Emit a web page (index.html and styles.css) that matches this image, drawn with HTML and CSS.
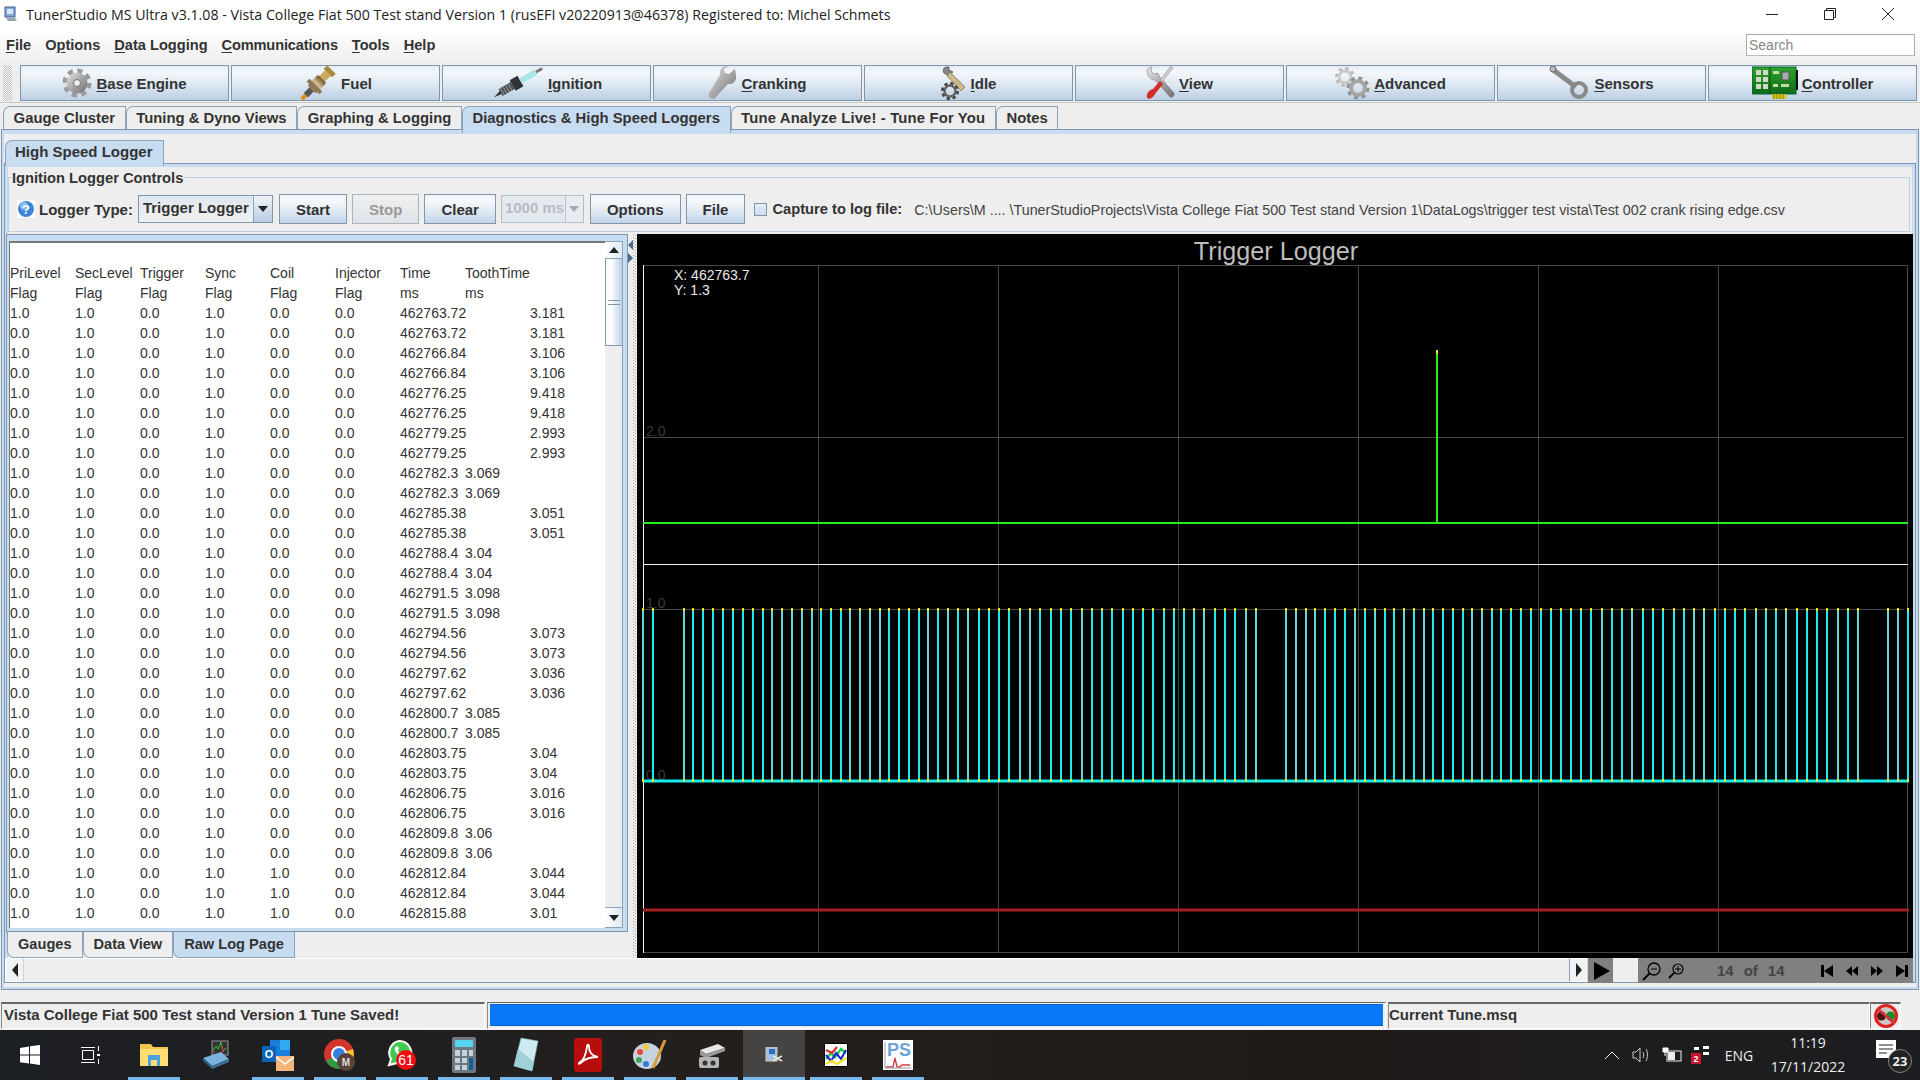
FILE: index.html
```html
<!DOCTYPE html>
<html lang="en">
<head>
<meta charset="utf-8">
<title>TunerStudio MS Ultra</title>
<link rel="stylesheet" href="styles.css">
</head>
<body>
<svg class="defs" width="0" height="0" aria-hidden="true">
  <defs>
    <linearGradient id="steel" x1="0" y1="0" x2="1" y2="1"><stop offset="0" stop-color="#e8e8e8"/><stop offset=".5" stop-color="#a8a8a8"/><stop offset="1" stop-color="#6f6f6f"/></linearGradient>
    <linearGradient id="brass" x1="0" y1="0" x2="1" y2="0"><stop offset="0" stop-color="#8a6a3a"/><stop offset=".5" stop-color="#d8c090"/><stop offset="1" stop-color="#6a5230"/></linearGradient>
    <linearGradient id="board" x1="0" y1="0" x2="0" y2="1"><stop offset="0" stop-color="#2ea52e"/><stop offset="1" stop-color="#0c6a16"/></linearGradient>
  </defs>
</svg>
<div class="window">
  <div class="chrome">
    <header class="titlebar">
      <svg class="appicon" width="16" height="16" viewBox="0 0 16 16"><rect x="2" y="1" width="10" height="10" fill="#7ea6d6" stroke="#41608a"/><rect x="4" y="3" width="6" height="5" fill="#d7e6f6"/><path d="M3 12l9 0 2 3H5z" fill="#9aa4ae"/></svg>
      <span class="title">TunerStudio MS Ultra v3.1.08 - Vista College Fiat 500 Test stand Version 1 (rusEFI v20220913@46378) Registered to: Michel Schmets</span>
      <div class="winctl">
        <svg width="14" height="14" viewBox="0 0 14 14"><path d="M1 7.500h12" stroke="#222" fill="none"/></svg>
        <svg width="14" height="14" viewBox="0 0 14 14"><path d="M1.500 3.500h9v9h-9zM3.500 3.500v-2h9v9h-2" stroke="#222" fill="none"/></svg>
        <svg width="14" height="14" viewBox="0 0 14 14"><path d="M1 1l12 12M13 1L1 13" stroke="#222" fill="none"/></svg>
      </div>
    </header>
    <nav class="menubar">
      <span class="menu"><u>F</u>ile</span>
      <span class="menu">O<u>p</u>tions</span>
      <span class="menu"><u>D</u>ata Logging</span>
      <span class="menu menu-tight"><u>C</u>ommunications</span>
      <span class="menu"><u>T</u>ools</span>
      <span class="menu"><u>H</u>elp</span>
      <div class="search">Search</div>
    </nav>
  </div>

  <div class="toolbar">
    <div class="grip"></div>
    <button class="tool">
      <svg width="30" height="34" viewBox="0 0 30 34"><circle cx="15" cy="17" r="12" fill="none" stroke="#9a9a9a" stroke-width="5" stroke-dasharray="5 4.420"/><circle cx="15" cy="17" r="10.500" fill="url(#steel)"/><circle cx="15" cy="17" r="3.500" fill="#eee" stroke="#777"/></svg>
      <span><u>B</u>ase Engine</span>
    </button>
    <button class="tool">
      <svg width="38" height="34" viewBox="0 0 38 34"><g transform="rotate(-45 19 17)"><rect x="-4" y="15" width="6" height="4" fill="#e08a1a"/><rect x="2" y="14" width="8" height="6" fill="#555"/><rect x="10" y="11" width="15" height="12" rx="2" fill="url(#brass)"/><rect x="12" y="8" width="4" height="18" fill="#8a7a5a"/><rect x="25" y="13" width="8" height="8" fill="#c9a860"/><rect x="33" y="11" width="5" height="12" fill="#a88a3c"/></g></svg>
      <span>Fuel</span>
    </button>
    <button class="tool">
      <svg width="53" height="34" viewBox="0 0 53 34"><g transform="rotate(-30 26 17)"><path d="M-1 18l9-3 0 4z" fill="#333"/><rect x="7" y="13" width="14" height="8" fill="#4a4f55"/><path d="M9 13v8M12 13v8M15 13v8M18 13v8" stroke="#999"/><rect x="21" y="11" width="9" height="12" fill="#30343a"/><rect x="30" y="14" width="18" height="6" fill="#a7e6e2"/><rect x="48" y="15.500" width="7" height="3" fill="#777"/></g></svg>
      <span><u>I</u>gnition</span>
    </button>
    <button class="tool">
      <svg width="29" height="34" viewBox="0 0 29 34"><path d="M27 3l-6 5-4-1-1-4 5-3c-6-1-10 3-9 9L1 27c-2 3 3 8 6 5l13-14c5 1 9-3 8-9z" fill="url(#steel)"/></svg>
      <span><u>C</u>ranking</span>
    </button>
    <button class="tool">
      <svg width="26" height="34" viewBox="0 0 26 34"><path d="M6 1c-3 0-5 3-3 6l3 2 3-1 3-2-2-1-2-1V1z" fill="#888" stroke="#333" stroke-width=".6"/><path d="M9 6l15 15-4 4L6 10z" fill="#cdb888" stroke="#665c44" stroke-width=".6"/><circle cx="9" cy="25" r="7" fill="none" stroke="#444" stroke-width="4" stroke-dasharray="3 2.500"/><circle cx="9" cy="25" r="5.500" fill="none" stroke="#666" stroke-width="2.500"/></svg>
      <span><u>I</u>dle</span>
    </button>
    <button class="tool">
      <svg width="29" height="34" viewBox="0 0 29 34"><path d="M1 6c0-3 2-5 5-5L5 5l3 3 3-1c2 0 2 3 2 3l15 17c1 3-2 5-4 4L9 14C5 14 1 10 1 6z" fill="url(#steel)" stroke="#777" stroke-width=".5"/><path d="M27 2l-11 14-2-2L25 0z" fill="#ccc" stroke="#888" stroke-width=".5"/><path d="M14 15l3 3-8 10c-2 5-8 6-8 3-1-3 2-7 6-8z" fill="#d32a2a"/></svg>
      <span><u>V</u>iew</span>
    </button>
    <button class="tool">
      <svg width="35" height="34" viewBox="0 0 35 34"><circle cx="10" cy="11" r="7.500" fill="none" stroke="#bbb" stroke-width="5" stroke-dasharray="3 2.890"/><circle cx="10" cy="11" r="6" fill="none" stroke="#c9c9c9" stroke-width="3"/><circle cx="23" cy="22" r="9" fill="none" stroke="#909090" stroke-width="5" stroke-dasharray="3.500 3.570"/><circle cx="23" cy="22" r="7" fill="none" stroke="#a5a5a5" stroke-width="4"/></svg>
      <span><u>A</u>dvanced</span>
    </button>
    <button class="tool">
      <svg width="41" height="34" viewBox="0 0 41 34"><path d="M3 3l24 18" stroke="#8a8a8a" stroke-width="5" fill="none"/><circle cx="4" cy="3" r="3" fill="#bbb" stroke="#666"/><circle cx="30" cy="24" r="7" fill="none" stroke="#888" stroke-width="4"/></svg>
      <span><u>S</u>ensors</span>
    </button>
    <button class="tool">
      <svg width="46" height="34" viewBox="0 0 46 34"><rect x="0" y="1" width="44" height="27" fill="url(#board)" stroke="#063"/><path d="M4 4h5v5H4zM11 4h5v5h-5zM4 11h5v5H4zM11 11h5v5h-5zM4 18h5v5H4zM11 18h5v5h-5z" fill="#d5d5c8"/><path d="M18 1v27" stroke="#0a4a12"/><rect x="30" y="6" width="7" height="8" fill="#aaa" stroke="#555"/><path d="M21 5h6v3h-6zM21 18h5v3h-5zM29 18h8v3h-8z" fill="#c8d8a8"/><rect x="20" y="28" width="14" height="5" fill="#d8c81a"/><path d="M22 28v5M25 28v5M28 28v5M31 28v5" stroke="#8a7a10"/><rect x="44" y="4" width="2" height="20" fill="#111"/></svg>
      <span><u>C</u>ontroller</span>
    </button>
  </div>

  <div class="tabs">
    <span class="tab">Gauge Cluster</span>
    <span class="tab">Tuning &amp; Dyno Views</span>
    <span class="tab">Graphing &amp; Logging</span>
    <span class="tab tab-on">Diagnostics &amp; High Speed Loggers</span>
    <span class="tab tab-wide">Tune Analyze Live! - Tune For You</span>
    <span class="tab">Notes</span>
  </div>

  <main class="outer">
    <div class="subtabs"><span class="tab tab-on sub">High Speed Logger</span></div>
    <section class="inner">
      <div class="group">
        <div class="grouptitle">Ignition Logger Controls</div>
        <div class="controls">
          <svg class="help" width="18" height="18" viewBox="0 0 18 18"><rect width="18" height="18" fill="#fff"/><circle cx="9" cy="9" r="8" fill="#3b84d8"/><circle cx="7" cy="6" r="4" fill="#8dbdf0"/><text x="9" y="13.500" class="helpq">?</text></svg>
          <span class="lbl">Logger Type:</span>
          <div class="combo"><span class="combotext">Trigger Logger</span><span class="comboarrow"><i class="tri"></i></span></div>
          <button class="btn">Start</button>
          <button class="btn off">Stop</button>
          <button class="btn">Clear</button>
          <div class="combo combo-off"><span class="combotext">1000 ms</span><span class="comboarrow"><i class="tri"></i></span></div>
          <button class="btn">Options</button>
          <button class="btn">File</button>
          <span class="check"></span>
          <span class="lbl lbl-cap">Capture to log file:</span>
          <span class="path">C:\Users\M .... \TunerStudioProjects\Vista College Fiat 500 Test stand Version 1\DataLogs\trigger test vista\Test 002 crank rising edge.csv</span>
        </div>
      </div>

      <div class="split">
        <div class="leftcol">
          <div class="logframe">
            <pre class="log">

PriLevel&#9;SecLevel&#9;Trigger&#9;Sync&#9;Coil&#9;Injector&#9;Time&#9;ToothTime
Flag&#9;Flag&#9;Flag&#9;Flag&#9;Flag&#9;Flag&#9;ms&#9;ms
1.0&#9;1.0&#9;0.0&#9;1.0&#9;0.0&#9;0.0&#9;462763.72&#9;3.181
0.0&#9;1.0&#9;0.0&#9;1.0&#9;0.0&#9;0.0&#9;462763.72&#9;3.181
1.0&#9;1.0&#9;0.0&#9;1.0&#9;0.0&#9;0.0&#9;462766.84&#9;3.106
0.0&#9;1.0&#9;0.0&#9;1.0&#9;0.0&#9;0.0&#9;462766.84&#9;3.106
1.0&#9;1.0&#9;0.0&#9;1.0&#9;0.0&#9;0.0&#9;462776.25&#9;9.418
0.0&#9;1.0&#9;0.0&#9;1.0&#9;0.0&#9;0.0&#9;462776.25&#9;9.418
1.0&#9;1.0&#9;0.0&#9;1.0&#9;0.0&#9;0.0&#9;462779.25&#9;2.993
0.0&#9;1.0&#9;0.0&#9;1.0&#9;0.0&#9;0.0&#9;462779.25&#9;2.993
1.0&#9;1.0&#9;0.0&#9;1.0&#9;0.0&#9;0.0&#9;462782.3&#9;3.069
0.0&#9;1.0&#9;0.0&#9;1.0&#9;0.0&#9;0.0&#9;462782.3&#9;3.069
1.0&#9;1.0&#9;0.0&#9;1.0&#9;0.0&#9;0.0&#9;462785.38&#9;3.051
0.0&#9;1.0&#9;0.0&#9;1.0&#9;0.0&#9;0.0&#9;462785.38&#9;3.051
1.0&#9;1.0&#9;0.0&#9;1.0&#9;0.0&#9;0.0&#9;462788.4&#9;3.04
0.0&#9;1.0&#9;0.0&#9;1.0&#9;0.0&#9;0.0&#9;462788.4&#9;3.04
1.0&#9;1.0&#9;0.0&#9;1.0&#9;0.0&#9;0.0&#9;462791.5&#9;3.098
0.0&#9;1.0&#9;0.0&#9;1.0&#9;0.0&#9;0.0&#9;462791.5&#9;3.098
1.0&#9;1.0&#9;0.0&#9;1.0&#9;0.0&#9;0.0&#9;462794.56&#9;3.073
0.0&#9;1.0&#9;0.0&#9;1.0&#9;0.0&#9;0.0&#9;462794.56&#9;3.073
1.0&#9;1.0&#9;0.0&#9;1.0&#9;0.0&#9;0.0&#9;462797.62&#9;3.036
0.0&#9;1.0&#9;0.0&#9;1.0&#9;0.0&#9;0.0&#9;462797.62&#9;3.036
1.0&#9;1.0&#9;0.0&#9;1.0&#9;0.0&#9;0.0&#9;462800.7&#9;3.085
0.0&#9;1.0&#9;0.0&#9;1.0&#9;0.0&#9;0.0&#9;462800.7&#9;3.085
1.0&#9;1.0&#9;0.0&#9;1.0&#9;0.0&#9;0.0&#9;462803.75&#9;3.04
0.0&#9;1.0&#9;0.0&#9;1.0&#9;0.0&#9;0.0&#9;462803.75&#9;3.04
1.0&#9;1.0&#9;0.0&#9;1.0&#9;0.0&#9;0.0&#9;462806.75&#9;3.016
0.0&#9;1.0&#9;0.0&#9;1.0&#9;0.0&#9;0.0&#9;462806.75&#9;3.016
1.0&#9;1.0&#9;0.0&#9;1.0&#9;0.0&#9;0.0&#9;462809.8&#9;3.06
0.0&#9;1.0&#9;0.0&#9;1.0&#9;0.0&#9;0.0&#9;462809.8&#9;3.06
1.0&#9;1.0&#9;0.0&#9;1.0&#9;1.0&#9;0.0&#9;462812.84&#9;3.044
0.0&#9;1.0&#9;0.0&#9;1.0&#9;1.0&#9;0.0&#9;462812.84&#9;3.044
1.0&#9;1.0&#9;0.0&#9;1.0&#9;1.0&#9;0.0&#9;462815.88&#9;3.01
0.0&#9;1.0&#9;0.0&#9;1.0&#9;1.0&#9;0.0&#9;462815.88&#9;3.01</pre>
            <div class="vscroll">
              <span class="vbtn"><i class="tri tri-up"></i></span>
              <span class="vthumb"><i class="gripline"></i></span>
              <span class="vtrack"></span>
              <span class="vbtn vbtn-low"><i class="tri"></i></span>
            </div>
          </div>
          <div class="btabs">
            <span class="btab">Gauges</span>
            <span class="btab">Data View</span>
            <span class="btab btab-on">Raw Log Page</span>
          </div>
        </div>

        <div class="splitter"><i class="sp-l"></i><i class="sp-r"></i></div>

        <svg class="chart" width="1276" height="724" viewBox="637 234 1276 724">
          <defs>
            <path id="pulseA" d="M653 608V782M693 608V782M703 608V782M713 608V782M723 608V782M733 608V782M743 608V782M753 608V782M763 608V782M821 608V782M831 608V782M841 608V782M889 608V782M899 608V782M909 608V782M919 608V782M938 608V782M958 608V782M979 608V782M989 608V782M999 608V782M1009 608V782M1040 608V782M1051 608V782M1061 608V782M1071 608V782M1092 608V782M1102 608V782M1112 608V782M1123 608V782M1133 608V782M1143 608V782M1153 608V782M1164 608V782M1174 608V782M1184 608V782M1194 608V782M1215 608V782M1225 608V782M1235 608V782M1325 608V782M1335 608V782M1345 608V782M1365 608V782M1385 608V782M1394 608V782M1414 608V782M1433 608V782M1443 608V782M1453 608V782M1463 608V782M1492 608V782M1501 608V782M1511 608V782M1521 608V782M1531 608V782M1541 608V782M1551 608V782M1561 608V782M1571 608V782M1581 608V782M1591 608V782M1612 608V782M1622 608V782M1643 608V782M1653 608V782M1663 608V782M1674 608V782M1684 608V782M1715 608V782M1725 608V782M1735 608V782M1745 608V782M1766 608V782M1776 608V782M1797 608V782M1807 608V782M1817 608V782M1827 608V782M1848 608V782M1908 608V782"/>
            <path id="pulseB" d="M643 608V782M684 608V782M772 608V782M782 608V782M792 608V782M802 608V782M812 608V782M850 608V782M860 608V782M870 608V782M880 608V782M928 608V782M948 608V782M968 608V782M1020 608V782M1030 608V782M1082 608V782M1204 608V782M1246 608V782M1256 608V782M1286 608V782M1296 608V782M1306 608V782M1315 608V782M1355 608V782M1375 608V782M1404 608V782M1424 608V782M1472 608V782M1482 608V782M1602 608V782M1632 608V782M1694 608V782M1704 608V782M1756 608V782M1786 608V782M1838 608V782M1858 608V782M1888 608V782M1898 608V782"/>
          </defs>
          <rect x="637" y="234" width="1276" height="724" class="c-bg"/>
          <text x="1276" y="260" class="c-title">Trigger Logger</text>
          <path class="c-grid" d="M643.500 265.500H1907.500V952.500H643.500M818.500 265V952M998.500 265V952M1178.500 265V952M1358.500 265V952M1538.500 265V952M1718.500 265V952M643 437.500H1904M643 609.500H1904"/>
          <path class="c-axis" d="M643.500 265V953"/>
          <text x="646" y="436" class="c-tick">2.0</text>
          <text x="646" y="608" class="c-tick">1.0</text>
          <text x="646" y="780" class="c-tick">0.0</text>
          <text x="674" y="280" class="c-read">X: 462763.7</text>
          <text x="674" y="295" class="c-read">Y: 1.3</text>
          <path class="c-green" d="M643 523H1908M1437 352V523"/>
          <path class="c-tip" d="M1437 350V354"/>
          <path class="c-white" d="M643 564.500H1908"/>
          <use href="#pulseA" class="c-cyan"/>
          <use href="#pulseB" class="c-cyan2"/>
          <path class="c-base" d="M643 781H1909"/>
          <use href="#pulseA" class="c-yellow"/>
          <use href="#pulseB" class="c-yellow"/>
          <path class="c-red" d="M643 910H1909"/>
        </svg>
      </div>

      <div class="hbar">
        <span class="hbtn"><i class="tri tri-left"></i></span>
        <span class="htrack"></span>
        <span class="hbtn hbtn-r"><i class="tri tri-right"></i></span>
        <span class="play"><i class="playtri"></i></span>
        <span class="hgap"></span>
        <div class="nav">
          <svg width="20" height="20" viewBox="0 0 20 20"><circle cx="12" cy="8" r="6" fill="none" stroke="#000" stroke-width="1.300"/><path d="M8 12l-7 7" stroke="#000" stroke-width="2"/><path d="M9 8h6" stroke="#000"/></svg>
          <svg class="zoomin" width="16" height="16" viewBox="0 0 16 16"><circle cx="10" cy="6" r="5" fill="none" stroke="#000" stroke-width="1.200"/><path d="M6 10l-5 5" stroke="#000" stroke-width="2"/><path d="M7 6h6M10 3v6" stroke="#000"/></svg>
          <span class="pages"><span>14</span><span>of</span><span>14</span></span>
          <svg width="14" height="14" viewBox="0 0 14 14"><path d="M1 1h3v12H1zM13 1v12L4 7z"/></svg>
          <svg width="14" height="14" viewBox="0 0 14 14"><path d="M7 2v10L1 7zM13 2v10L7 7z"/></svg>
          <svg width="14" height="14" viewBox="0 0 14 14"><path d="M1 2v10l6-5zM7 2v10l6-5z"/></svg>
          <svg width="14" height="14" viewBox="0 0 14 14"><path d="M1 1v12l9-6zM10 1h3v12h-3z"/></svg>
        </div>
      </div>
    </section>
  </main>

  <footer class="status">
    <div class="cell cell-msg">Vista College Fiat 500 Test stand Version 1 Tune Saved!</div>
    <div class="cell cell-bar"><div class="bar"></div></div>
    <div class="cell cell-tune">Current Tune.msq</div>
    <div class="cell cell-icon">
      <svg width="26" height="26" viewBox="0 0 26 26"><circle cx="13" cy="13" r="10.500" fill="#c9c9c9" stroke="#e32020" stroke-width="3"/><circle cx="8.500" cy="13" r="4.500" fill="#4a1212"/><circle cx="17.500" cy="13" r="4.500" fill="#1f8a2c"/><path d="M5 6l16 14" stroke="#e0303a" stroke-width="2.500"/></svg>
    </div>
  </footer>
</div>

<div class="taskbar">
  <span class="slot slot-n">
    <svg width="20" height="20" viewBox="0 0 20 20"><path d="M0 3l9-1.500V9.500H0zM10 1.300L20 0v9.500H10zM0 10.500h9V18.500l-9-1.300zM10 10.500h10V20l-10-1.400z" fill="#fff"/></svg>
  </span>
  <span class="slot slot-n">
    <svg width="20" height="20" viewBox="0 0 20 20" fill="none" stroke="#fff"><path d="M2.500 5.500h11v9h-11zM1 2.500h14M1 17.500h14M18.500 1v5M18.500 14v5"/><path d="M17 9h3v2h-3z" fill="#fff" stroke="none"/></svg>
  </span>
  <span class="slot run">
    <svg width="28" height="24" viewBox="0 0 28 24"><path d="M0 1h11l2 3h15v19H0z" fill="#f4c64e"/><path d="M0 6h28v17H0z" fill="#ffdd72"/><path d="M8 12h12v11h-3v-6h-6v6H8z" fill="#4aa3dc"/></svg>
  </span>
  <span class="slot slot-n">
    <svg width="28" height="30" viewBox="0 0 28 30"><rect x="10" y="1" width="16" height="14" fill="#333" stroke="#999"/><path d="M11 10l3-4 2 3 3-7 2 9 3-3" fill="none" stroke="#37c837"/><path d="M11 11l2 2M20 6l1 7" stroke="#d33"/><path d="M1 18l18-6 8 7-17 7z" fill="#7ab3dd"/><path d="M1 18l9 8v3l-9-8z" fill="#2c5f8a"/><path d="M10 26l17-7v3L10 29z" fill="#44708f"/></svg>
  </span>
  <span class="slot run">
    <svg width="32" height="32" viewBox="0 0 32 32"><rect x="8" y="1" width="20" height="20" fill="#1a7fdc"/><rect x="18" y="1" width="10" height="10" fill="#31a9ee"/><rect x="0" y="7" width="14" height="16" fill="#0b63b8"/><text x="7" y="19" class="tb-o">O</text><rect x="14" y="17" width="18" height="15" fill="#f3b57b"/><path d="M14 18l9 7 9-7" fill="none" stroke="#fff" stroke-width="1.500"/></svg>
  </span>
  <span class="slot run">
    <svg width="32" height="32" viewBox="0 0 32 32"><circle cx="15" cy="15" r="15" fill="#d5342c"/><path d="M15 15L2 22A15 15 0 0 0 22 28z" fill="#2c9a46"/><path d="M15 15l7 13A15 15 0 0 0 29 10z" fill="#f7c62d"/><circle cx="15" cy="15" r="7" fill="#3a7fe0" stroke="#fff" stroke-width="2"/><circle cx="22" cy="23" r="9" fill="#5a4236"/><text x="22" y="27" class="tb-m">M</text></svg>
  </span>
  <span class="slot run">
    <svg width="32" height="32" viewBox="0 0 32 32"><path d="M13 2a12 12 0 0 1 10 19L3 26l2-6A12 12 0 0 1 13 2z" fill="#3ecb4e" stroke="#fff" stroke-width="2"/><path d="M9 8c-2 4 5 12 9 10l1-3-3-1-1 1c-2-1-3-3-3-4l1-1-1-3z" fill="#fff"/><circle cx="20" cy="21" r="10" fill="#f20c14"/><text x="20" y="26" class="tb-b">61</text></svg>
  </span>
  <span class="slot run">
    <svg width="24" height="36" viewBox="0 0 24 36"><rect width="24" height="36" rx="2" fill="#6d7880"/><rect x="3" y="3" width="18" height="7" fill="#5bd4f0"/><path d="M3 13h5v6H3zM10 13h5v6h-5zM17 13h4v6h-4zM3 21h5v5H3zM10 21h5v5h-5zM3 28h5v5H3zM10 28h5v5h-5z" fill="#c7d3db"/><rect x="17" y="21" width="4" height="12" fill="#10609c"/></svg>
  </span>
  <span class="slot run">
    <svg width="26" height="36" viewBox="0 0 26 36"><path d="M8 1l17 3-6 30-18-5z" fill="#cdeaf0" stroke="#7bb" stroke-width=".6"/><path d="M5 12l-4 17 18 5 2-9z" fill="#9fd0d8"/></svg>
  </span>
  <span class="slot run">
    <svg width="28" height="34" viewBox="0 0 28 34"><rect width="28" height="34" rx="3" fill="#b60d0d"/><path d="M5 25c4-2 7-9 8-16 0-3 2-3 2 0 0 5 3 9 9 10-5 0-11 1-15 4-2 2-5 4-4 2z" fill="none" stroke="#fff" stroke-width="1.800"/></svg>
  </span>
  <span class="slot run">
    <svg width="34" height="34" viewBox="0 0 34 34"><ellipse cx="14" cy="18" rx="14" ry="13" fill="#c7d4e0"/><circle cx="7" cy="14" r="3" fill="#e84a3a"/><circle cx="13" cy="9" r="3" fill="#f5c93a"/><circle cx="6" cy="22" r="3" fill="#3ba35a"/><circle cx="13" cy="26" r="3" fill="#2c7fd5"/><path d="M32 2L20 30" stroke="#d89a3e" stroke-width="3"/></svg>
  </span>
  <span class="slot run">
    <svg width="28" height="30" viewBox="0 0 28 30"><path d="M2 10l18-6 7 4-19 6z" fill="#e8e8e8"/><path d="M2 10l6 4v4L2 15zM8 14l19-6v3L8 18z" fill="#9a9a9a"/><rect x="1" y="17" width="20" height="11" rx="2" fill="#b4b4b4"/><circle cx="7" cy="23" r="2.500" fill="#333"/><circle cx="15" cy="23" r="2.500" fill="#333"/></svg>
  </span>
  <span class="slot run slot-on">
    <svg width="18" height="16" viewBox="0 0 18 16"><rect x="1" y="0" width="11" height="14" fill="#9cc2e6" stroke="#d9c7a0"/><rect x="4" y="2" width="6" height="5" fill="#2f6fb8"/><path d="M8 9l9 5M8 14l9-5" stroke="#e6e6e6" stroke-width="1.500"/></svg>
  </span>
  <span class="slot run">
    <svg width="24" height="24" viewBox="0 0 24 24"><rect width="24" height="24" fill="#000"/><rect x="1" y="1" width="22" height="22" fill="#fff"/><path d="M2 16l5-6 4 4 6-8 5 4" fill="none" stroke="#1fd14a" stroke-width="2.500"/><path d="M2 12l5 6 5-8 5 6 5-9" fill="none" stroke="#2222d8" stroke-width="2"/><path d="M2 7l6 3 5-6" fill="none" stroke="#e0242a" stroke-width="2"/><path d="M2 21l6-3 5 3 9-6" fill="none" stroke="#f5e52a" stroke-width="2.500"/></svg>
  </span>
  <span class="slot run">
    <svg width="30" height="30" viewBox="0 0 30 30"><rect width="30" height="30" fill="#fff"/><text x="4" y="16" class="tb-ps">PS</text><path d="M3 27h7l2-9 2 9h3l2-2h8" fill="none" stroke="#d43d3d" stroke-width="1.300"/><path d="M2 2v26h26" fill="none" stroke="#99a"/></svg>
  </span>

  <div class="tray">
    <svg width="16" height="10" viewBox="0 0 16 10" fill="none" stroke="#eee"><path d="M1 9l7-7 7 7"/></svg>
    <svg class="spk" width="20" height="16" viewBox="0 0 20 16" fill="none" stroke="#ccc"><path d="M1 5h3l4-4v14l-4-4H1zM11 5c1 2 1 4 0 6M14 2c2 4 2 8 0 12"/></svg>
    <svg class="batt" width="20" height="16" viewBox="0 0 20 16"><rect x="5" y="4" width="14" height="10" fill="none" stroke="#eee"/><rect x="6" y="5" width="7" height="8" fill="#eee"/><path d="M1 1h5v4H1zM3 5v4" stroke="#fff" fill="#fff"/></svg>
    <svg class="net" width="20" height="18" viewBox="0 0 20 18"><rect x="0" y="7" width="10" height="11" fill="#c8142e"/><text x="5" y="16" class="tb-2">2</text><path d="M3 1h5v3H3zM12 0h6v3h-6zM12 6h6v3h-6z" fill="#fff"/></svg>
    <span class="lang">ENG</span>
    <div class="clock"><span>11:19</span><span>17/11/2022</span></div>
    <div class="notif">
      <svg width="20" height="18" viewBox="0 0 20 18"><path d="M0 0h20v18H0z" fill="#fff"/><path d="M3 5h14M3 9h14M3 13h8" stroke="#222"/></svg>
      <span class="badge">23</span>
    </div>
  </div>
</div>
</body>
</html>
```

FILE: styles.css
```css
* { box-sizing: border-box; }
html, body { margin: 0; padding: 0; }
body {
  width: 1920px; height: 1080px; overflow: hidden; background: #eee;
  font-family: "Liberation Sans", Arial, sans-serif; font-size: 15px; color: #333;
}
.defs { position: absolute; }
u { text-decoration-thickness: 1px; text-underline-offset: 2px; }
i { display: block; }

.window { height: 1030px; display: flex; flex-direction: column; }

.chrome { height: 64px; flex: none; background: linear-gradient(#fff 0, #fff 30px, #eee 64px); }
.titlebar { height: 32px; display: flex; align-items: center; padding: 0 0 4px 3px; }
.appicon { margin-right: 7px; }
.title { font-family: "Open Sans", sans-serif; font-size: 14.200px; color: #222; white-space: nowrap; }
.winctl { margin-left: auto; display: flex; gap: 44px; padding-right: 25px; }

.menubar { height: 32px; display: flex; align-items: center; padding: 0 5px 6px 6px; gap: 14px; font-weight: bold; font-size: 14.600px; color: #333; }
.menu { white-space: nowrap; }
.menu-tight { letter-spacing: -.15px; }
.search {
  margin-left: auto; width: 169px; height: 22px; border: 1px solid #aaa; border-bottom-color: #bbb;
  background: #fff; font-weight: normal; color: #888; font-size: 14px; line-height: 20px; padding-left: 2px;
}

.toolbar { height: 39px; flex: none; display: flex; gap: 2px; padding: 1px 3px 2px 3px; border-bottom: 1px solid #c8c8c8; }
.grip {
  width: 15px; height: 36px;
  background: repeating-conic-gradient(#c4c4c4 0 25%, #f6f6f6 0 50%) 0 0 / 2px 2px;
  background-clip: padding-box; border-right: 6px solid #eee;
}
.tool {
  width: 209px; height: 36px; padding: 0; display: flex; align-items: center; justify-content: center; gap: 4px;
  border: 1px solid #7f96ad; background: linear-gradient(#e4ecf4 0, #f4f7fb 18%, #dde8f2 55%, #bccfe4 100%);
  font: bold 15px "Liberation Sans", Arial, sans-serif; color: #333;
}

.tabs { height: 23px; flex: none; margin-top: 3px; padding-left: 3px; display: flex; align-items: flex-end; }
.tab {
  height: 23px; padding: 0 9.600px; display: flex; align-items: center;
  background: #eee; border: 1px solid #8ea3ba; border-bottom: 0; border-top-left-radius: 7px 7px;
  font-weight: bold; font-size: 14.850px; white-space: nowrap; color: #333;
}
.tab-wide { letter-spacing: .15px; }
.tab-on { background: #c8dcf1; height: 27px; margin-bottom: -4px; padding-bottom: 4px; position: relative; z-index: 1; }

.outer {
  height: 861px; flex: none; margin: 0 1px; border: 1px solid #7f95b0;
  box-shadow: inset 0 0 0 2px #c8dcf1, inset 0 3px 0 1px #c8dcf1;
  padding: 4px 2px 3px; display: flex; flex-direction: column;
}
.subtabs { height: 29px; padding: 6px 0 0 1px; display: flex; align-items: flex-start; flex: none; }
.sub { height: 26px; margin-bottom: 0; padding: 0 10px 4px 9px; font-size: 15px; }

.inner {
  flex: none; height: 820px; border: 1px solid #7f95b0;
  box-shadow: inset 0 3px 0 0 #c8dcf1, inset 3px 0 0 0 #c8dcf1, inset -3px 0 0 0 #c8dcf1;
  padding: 13px 3px 0; display: flex; flex-direction: column;
}

.group { height: 55px; flex: none; margin: 0 2px 0 0; border: 1px solid #bcd0e2; padding: 0 0 0 8px; }
.grouptitle { margin: -9px 0 0 -5px; height: 18px; line-height: 18px; width: max-content; background: #eee; padding: 0 2px 0 0; font-weight: bold; font-size: 14.700px; }
.controls { display: flex; align-items: center; height: 30px; margin-top: 7px; }
.help { margin-right: 4px; flex: none; }
.helpq { font: bold 13px "Liberation Sans", sans-serif; fill: #fff; text-anchor: middle; }
.lbl { font-weight: bold; white-space: nowrap; }
.lbl-cap { font-size: 14.700px; }
.combo {
  margin: 0 6px 0 5px; height: 28px; display: flex; border: 1px solid #7f96ad; width: 135px;
  background: linear-gradient(#dfe7ef, #f1f1f1);
}
.combotext { flex: 1; font-weight: bold; line-height: 24px; padding-left: 4px; white-space: nowrap; }
.comboarrow { width: 19px; display: flex; align-items: center; justify-content: center; border-left: 1px solid #8ea3ba; background: linear-gradient(#f0f4f8, #b8cce2); }
.tri { width: 0; height: 0; border: 5px solid transparent; border-top: 6px solid #222; border-bottom: 0; }
.tri-up { border-top: 0; border-bottom: 6px solid #222; }
.tri-left { border: 5px solid transparent; border-right: 6px solid #222; border-left: 0; border-top-width: 7px; border-bottom-width: 7px; }
.tri-right { border: 5px solid transparent; border-left: 6px solid #222; border-right: 0; border-top-width: 7px; border-bottom-width: 7px; }
.combo-off { width: 83px; margin: 0 6px 0 0; border-color: #aebfd0; background: #e4e9ee; }
.combo-off .combotext { color: #b4bcc6; padding-left: 3px; }
.combo-off .comboarrow { width: 18px; background: #e8ecf0; border-left-color: #b5c3d2; }
.combo-off .tri { border-top-color: #9eabb8; }
.btn {
  height: 30px; padding: 0 16px; margin-right: 5px; border: 1px solid #7f96ad;
  background: linear-gradient(#f2f5f9 0, #f5f8fb 25%, #c2d5e9 100%);
  font: bold 15px "Liberation Sans", Arial, sans-serif; color: #333;
}
.off { color: #999; border-color: #a8b4c0; background: linear-gradient(#efefef, #dfe3e8); }
.check { width: 13px; height: 13px; margin: 0 5px 0 4px; border: 1px solid #7f96ad; background: linear-gradient(#e6eef6, #cddcec); }
.path { margin-left: 12px; padding-top: 1px; font-size: 14.300px; color: #444; white-space: nowrap; }

.split { flex: none; height: 724px; margin: 2px 0 0 -2px; display: flex; }
.leftcol { width: 622px; flex: none; display: flex; flex-direction: column; }
.logframe {
  height: 698px; flex: none; display: flex; border: 1px solid #7f95b0;
  padding: 6px 4px 3px 2px; background: #c8dcf1;
}
.log {
  margin: 0; flex: 1; min-width: 0; overflow: hidden; background: #fff; border: 1px solid #777; border-width: 2px 0 0 1px;
  font: 14px/20px "Liberation Sans", Arial, sans-serif; color: #333; tab-size: 65px;
}
.vscroll { width: 18px; flex: none; display: flex; flex-direction: column; background: #eee; border: 1px solid #8ea3ba; border-left: 0; }
.vbtn { height: 17px; flex: none; display: flex; align-items: center; justify-content: center; background: linear-gradient(90deg, #fff, #dfe8f1); border-bottom: 1px solid #8ea3ba; }
.vbtn-low { height: 20px; border-bottom: 0; border-top: 1px solid #8ea3ba; }
.vthumb { height: 87px; flex: none; display: flex; align-items: center; justify-content: center; background: linear-gradient(90deg, #f4f7fb, #fff 30%, #bcd0e6); border-bottom: 1px solid #7f96ad; border-left: 1px solid #7f96ad; }
.gripline { width: 12px; height: 5px; border-top: 1px solid #7f96ad; border-bottom: 1px solid #7f96ad; }
.vtrack { flex: 1; }

.btabs { display: flex; height: 26px; padding-left: 1px; }
.btab {
  height: 26px; padding: 0 10px 1px 10px; display: flex; align-items: center; font-weight: bold; font-size: 14.600px; white-space: nowrap;
  border: 1px solid #8ea3ba; border-top: 0; border-bottom-left-radius: 7px; background: #eee;
}
.btab-on { background: #c8dcf1; }

.splitter {
  width: 9px; flex: none; padding-top: 6px;
  background:
    repeating-linear-gradient(#aaa 0 1px, transparent 1px 3px) 5px 0 / 1px 100% no-repeat,
    repeating-linear-gradient(transparent 0 1px, #aaa 1px 2px, transparent 2px 3px) 7px 0 / 1px 100% no-repeat;
}
.sp-l { width: 0; height: 0; border: 5px solid transparent; border-right: 5px solid #4a6a92; border-left: 0; margin-bottom: 3px; }
.sp-r { width: 0; height: 0; border: 5px solid transparent; border-left: 5px solid #4a6a92; border-right: 0; }

.chart { flex: none; display: block; }
.c-bg { fill: #000; }
.c-title { font: 25.200px "Liberation Sans", sans-serif; fill: #bdbdbd; text-anchor: middle; }
.c-grid { fill: none; stroke: #474747; stroke-width: 1; }
.c-axis { stroke: #eee; stroke-width: 1; fill: none; }
.c-tick { font: 14px "Liberation Sans", sans-serif; fill: #3a3a3a; }
.c-read { font: 14px "Liberation Sans", sans-serif; fill: #e8e8e8; }
.c-green { fill: none; stroke: #22ee22; stroke-width: 2; }
.c-tip { fill: none; stroke: #e8e820; stroke-width: 2; }
.c-white { fill: none; stroke: #eee; stroke-width: 1; }
.c-cyan { fill: none; stroke: #14ecec; stroke-width: 2; }
.c-cyan2 { fill: none; stroke: #62d6d6; stroke-width: 2; }
.c-base { fill: none; stroke: #14ecec; stroke-width: 3; }
.c-yellow { fill: none; stroke: #eaea2a; stroke-width: 2; stroke-dasharray: 3 168 3; }
.c-red { fill: none; stroke: #a32020; stroke-width: 3; }

.hbar { height: 25px; flex: none; display: flex; margin: 0 -1px 0 -3px; }
.hbtn { width: 19px; height: 24px; flex: none; display: flex; align-items: center; justify-content: center; border: 1px solid #fff; border-right-color: #c8d4e0; background: #f0f2f4; }
.htrack { flex: 1; border-top: 1px solid #fff; }
.hbtn-r { border-left-color: #8ea3ba; }
.play { width: 25px; flex: none; background: #808080; display: flex; align-items: center; justify-content: center; }
.playtri { width: 0; height: 0; border: 8px solid transparent; border-left: 16px solid #000; border-right: 0; border-top-width: 9px; border-bottom-width: 9px; margin-left: 3px; }
.hgap { width: 25px; flex: none; }
.nav { width: 275px; flex: none; background: #808080; display: flex; align-items: center; padding-left: 4px; }
.zoomin { margin-left: 6px; }
.nav svg:nth-last-child(-n+4) { margin-left: 11px; }
.pages { display: flex; gap: 10px; font-weight: bold; color: #444; font-size: 15px; margin: 0 24px 0 33px; }

.status { flex: 1; display: flex; padding: 12px 0 1px 1px; gap: 2px; }
.cell { height: 27px; padding-bottom: 3px; border-top: 2px solid #666; border-left: 1px solid #888; border-bottom: 1px solid #fff; border-right: 1px solid #fff; font-weight: bold; display: flex; align-items: center; white-space: nowrap; }
.cell-msg { width: 484px; padding-left: 2px; }
.cell-bar { width: 899px; padding: 1px 2px 2px 2px; background: #eee; border-top-width: 1px; }
.bar { width: 100%; height: 100%; background: #0a78fa; border: 1px solid #0a5fc0; border-left: 0; border-right: 0; }
.cell-tune { width: 482px; padding-left: 0; }
.cell-icon { width: 31px; margin-left: -2px; padding-bottom: 0; justify-content: center; }

.taskbar {
  height: 50px; display: flex; align-items: center; background: linear-gradient(90deg, #1c1f24 0, #241f1c 40%, #201b19 70%, #1d1e22 100%);
  color: #eee; font-family: "Open Sans", sans-serif; font-size: 14px;
}
.slot { width: 62px; height: 50px; flex: none; display: flex; align-items: center; justify-content: center; position: relative; }
.slot-n:first-child { width: 60px; }
.slot-n:nth-child(2) { width: 60px; margin-right: 2.500px; }
.run::after { content: ""; position: absolute; left: 5px; right: 5px; bottom: 0; height: 3px; background: #76b9ed; }
.slot-on { background: #464442; }
.slot-on::after { left: 0; right: 0; }
.tb-o { font: bold 11px "Liberation Sans", sans-serif; fill: #fff; text-anchor: middle; }
.tb-m { font: bold 10px "Liberation Sans", sans-serif; fill: #ddd; text-anchor: middle; }
.tb-b { font: 14px "Liberation Sans", sans-serif; fill: #fff; text-anchor: middle; }
.tb-2 { font: bold 9px "Liberation Sans", sans-serif; fill: #fff; text-anchor: middle; }
.tb-ps { font: bold 18px "Liberation Sans", sans-serif; fill: #6ba3d6; }

.tray { margin-left: auto; display: flex; align-items: center; height: 50px; gap: 11px; padding-right: 14px; }
.spk { margin-left: 1px; }
.batt { margin-left: -1px; }
.net { margin-left: -2px; }
.lang { margin-left: 2px; width: 30px; text-align: center; font-size: 14px; }
.clock { width: 86px; display: flex; flex-direction: column; align-items: center; gap: 3px; line-height: 21px; font-size: 14px; padding-bottom: 2px; white-space: nowrap; }
.notif { margin-left: 14px; width: 30px; height: 30px; position: relative; }
.badge {
  position: absolute; right: -6px; bottom: -3px; width: 24px; height: 24px; border-radius: 50%;
  background: #222; border: 1px solid #888; display: flex; align-items: center; justify-content: center; font-size: 13px; font-weight: bold; color: #eee;
}
```
